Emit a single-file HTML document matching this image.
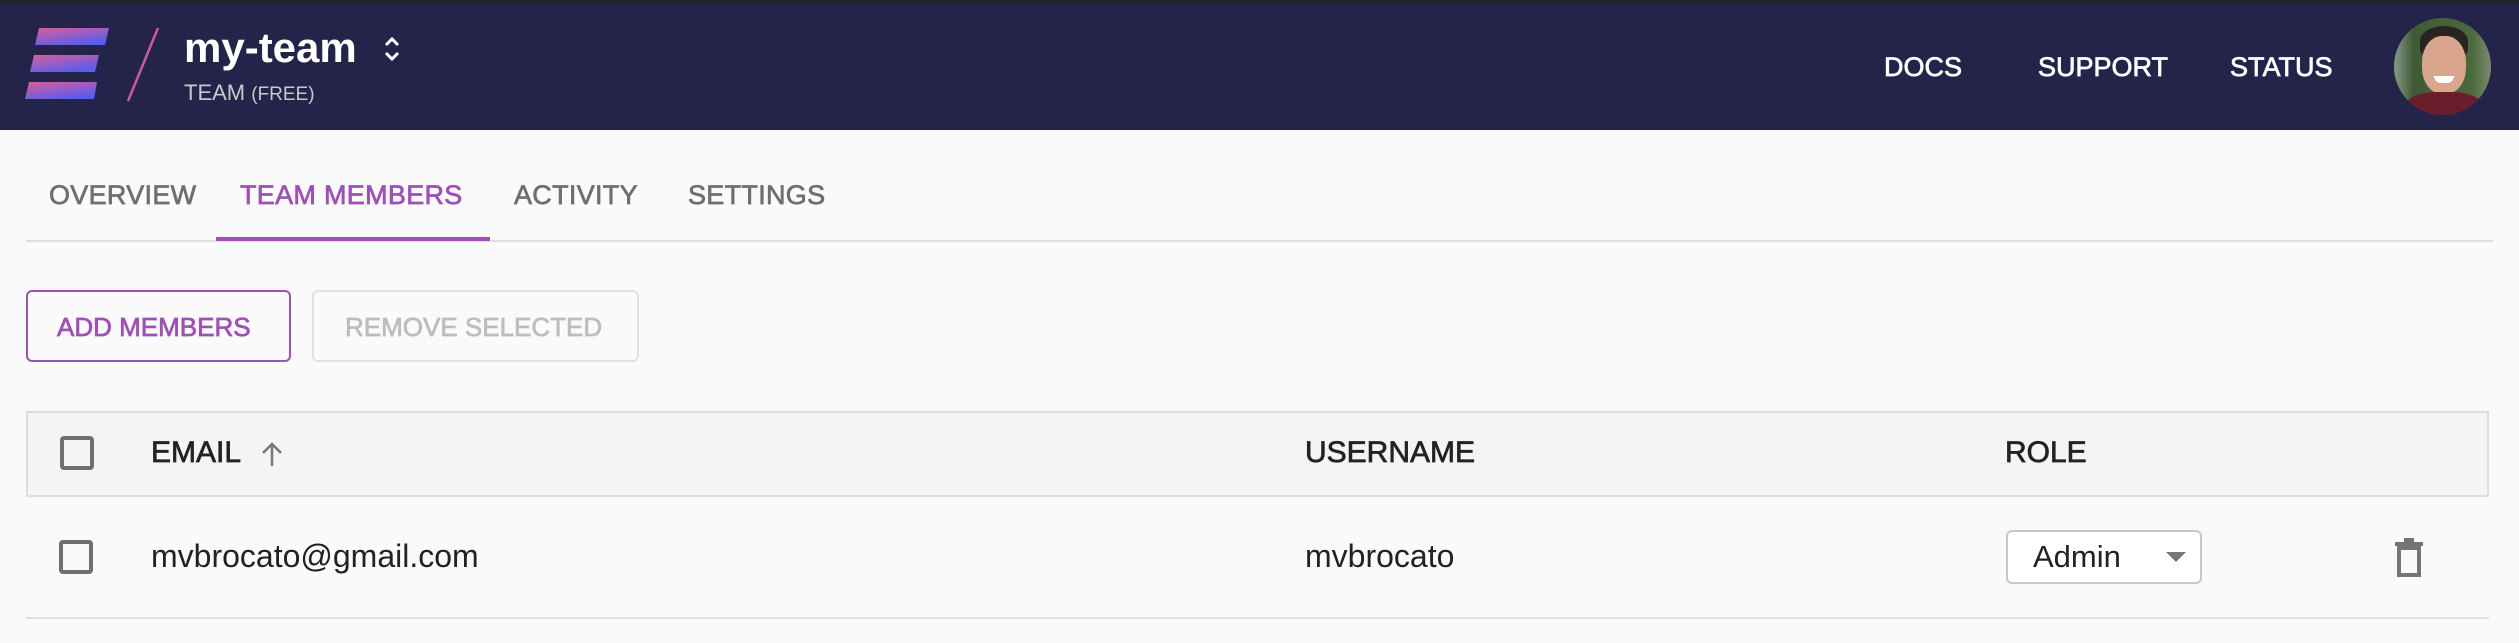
<!DOCTYPE html>
<html><head><meta charset="utf-8"><style>
*{margin:0;padding:0;box-sizing:border-box}
body{width:2519px;height:643px;background:#fafafa;font-family:"Liberation Sans",sans-serif;position:relative;overflow:hidden}
.a{position:absolute;white-space:nowrap}
.m{-webkit-text-stroke:0.7px currentColor}
.hdr{left:0;top:0;width:2519px;height:130px;background:#24244a;border-top:3px solid #222}
.nav{color:#fff;font-size:27px;top:52px}
.tab{font-size:27px;top:180px;color:#6f6f6f;letter-spacing:.3px}
.th{font-size:30px;color:#222;top:436px}
.cb{width:34px;height:34px;border:4px solid #6f6f6f;border-radius:4px}
</style></head><body>
<div class="a hdr"></div>
<svg class="a" style="left:25px;top:25px" width="145" height="80" viewBox="0 0 145 80">
<defs><linearGradient id="g" x1="0" y1="0" x2="0.6" y2="1"><stop offset="0" stop-color="#d85f96"/><stop offset="1" stop-color="#5a5cf0"/></linearGradient></defs>
<polygon points="14,3 84,3 80,20 10,20" fill="url(#g)"/>
<polygon points="9,30 74,30 70,47 5,47" fill="url(#g)"/>
<polygon points="4,57 72,57 69,74 0,74" fill="url(#g)"/>
<line x1="133" y1="3" x2="103" y2="76" stroke="#d0589a" stroke-width="2.5"/>
</svg>
<div class="a" style="left:184px;top:24px;font-size:42px;font-weight:bold;color:#fff">my-team</div>
<svg class="a" style="left:383px;top:36px" width="18" height="26" viewBox="0 0 18 26"><path d="M3 9 L9 3 L15 9 M3 17 L9 23 L15 17" stroke="#fff" stroke-width="3" fill="none"/></svg>
<div class="a" style="left:184px;top:80px;font-size:22px;color:#c8c8c8">TEAM <span style="font-size:19px">(FREE)</span></div>
<div class="a nav m" style="left:1884px">DOCS</div>
<div class="a nav m" style="left:2038px">SUPPORT</div>
<div class="a nav m" style="left:2230px">STATUS</div>
<div class="a" style="left:2394px;top:18px;width:97px;height:97px;border-radius:50%;overflow:hidden;background:linear-gradient(90deg,#8a9a88 0,#3f5a36 20%,#4a6a3a 80%,#7a8a70 100%)">
<div class="a" style="left:26px;top:8px;width:48px;height:30px;border-radius:50% 50% 20% 20%;background:#2a2420"></div>
<div class="a" style="left:28px;top:18px;width:44px;height:58px;border-radius:45%;background:#d9a58c"></div>
<div class="a" style="left:10px;top:74px;width:80px;height:40px;border-radius:40% 40% 0 0;background:#6b1d2b"></div>
<div class="a" style="left:40px;top:58px;width:20px;height:7px;border-radius:0 0 10px 10px;background:#fff"></div>
</div>
<div class="a tab m" style="left:49px">OVERVIEW</div>
<div class="a tab m" style="left:240px;color:#a04fb8">TEAM MEMBERS</div>
<div class="a tab m" style="left:514px">ACTIVITY</div>
<div class="a tab m" style="left:688px">SETTINGS</div>
<div class="a" style="left:26px;top:240px;width:2467px;height:2px;background:#dedede"></div>
<div class="a" style="left:216px;top:237px;width:274px;height:4px;background:#a04fb8"></div>
<div class="a" style="left:26px;top:290px;width:265px;height:72px;border:2px solid #a04fb8;border-radius:6px"></div>
<div class="a m" style="left:57px;top:312px;font-size:26px;color:#a04fb8">ADD MEMBERS</div>
<div class="a" style="left:312px;top:290px;width:327px;height:72px;border:2px solid #e0e0e0;border-radius:6px"></div>
<div class="a m" style="left:345px;top:312px;font-size:26px;color:#bdbdbd">REMOVE SELECTED</div>
<div class="a" style="left:26px;top:411px;width:2463px;height:86px;background:#f4f4f4;border:2px solid #dddddd"></div>
<div class="a cb" style="left:60px;top:436px"></div>
<div class="a th m" style="left:151px">EMAIL</div>
<svg class="a" style="left:258px;top:440px" width="28" height="28" viewBox="0 0 28 28"><path d="M14 26 V4 M5 13 L14 4 L23 13" stroke="#777" stroke-width="2.5" fill="none"/></svg>
<div class="a th m" style="left:1305px">USERNAME</div>
<div class="a th m" style="left:2005px">ROLE</div>
<div class="a cb" style="left:59px;top:540px"></div>
<div class="a" style="left:151px;top:538px;font-size:32px;color:#222">mvbrocato@gmail.com</div>
<div class="a" style="left:1305px;top:538px;font-size:32px;color:#222">mvbrocato</div>
<div class="a" style="left:2006px;top:530px;width:196px;height:54px;border:2px solid #c8c8c8;border-radius:6px;background:#fff"></div>
<div class="a" style="left:2033px;top:539px;font-size:31px;color:#222">Admin</div>
<div class="a" style="left:2166px;top:552px;width:0;height:0;border-left:10px solid transparent;border-right:10px solid transparent;border-top:10px solid #777"></div>
<svg class="a" style="left:2392px;top:538px" width="34" height="40" viewBox="0 0 34 40"><path d="M3 6 H31 M12 2 H22" stroke="#757575" stroke-width="4" fill="none"/><rect x="7" y="10" width="20" height="27" stroke="#757575" stroke-width="4" fill="none"/></svg>
<div class="a" style="left:26px;top:617px;width:2463px;height:2px;background:#e0e0e0"></div>
</body></html>
